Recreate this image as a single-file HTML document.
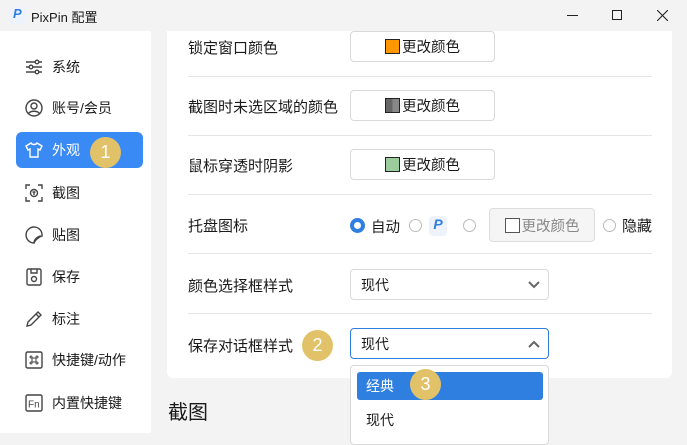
<!DOCTYPE html>
<html><head><meta charset="utf-8">
<style>
*{box-sizing:border-box;margin:0;padding:0}
body{width:687px;height:433px;overflow:hidden;background:#f3f3f3;font-family:"Liberation Sans","Noto Sans CJK SC",sans-serif;color:#1a1a1a;position:relative;font-size:14px}
.abs{position:absolute}
.side{left:0;top:31px;width:151px;height:402px;background:#fff}
.item{position:absolute;left:16px;width:127px;height:36px;display:flex;align-items:center;padding-left:8px;font-size:14px;border-radius:6px}
.item svg{width:20px;height:20px;margin-right:8px;fill:none;stroke:#444;stroke-width:1.4}
.item.act{background:#3a8af5;color:#fff}
.item.act svg{stroke:#fff}
.badge{position:absolute;width:31px;height:31px;border-radius:50%;background:#e2c268;color:#fff;font-size:18px;display:flex;align-items:center;justify-content:center}
.card{left:167px;top:31px;width:505px;height:347px;background:#fff;border-radius:0 0 6px 6px}
.line{position:absolute;left:188px;width:464px;height:1px;background:#e5e5e5}
.lbl{position:absolute;left:188px;font-size:15px}
.btn{position:absolute;left:350px;width:145px;height:31px;border:1px solid #d9d9d9;border-radius:4px;background:#fff;display:flex;align-items:center;justify-content:center;font-size:14.5px}
.sw{width:15px;height:15px;border:1px solid #222;margin-right:2px}
.sel{position:absolute;left:350px;width:199px;height:31px;border:1px solid #d9d9d9;border-radius:4px;background:#fff;padding-left:10px;display:flex;align-items:center}
.sel svg{position:absolute;right:8px;top:11px}
.radio{position:absolute;width:13px;height:13px;border-radius:50%;border:1px solid #bbb;background:#fff}
</style></head><body>
<div class="abs" style="left:9px;top:7px;width:17px;height:17px;border-radius:4px;background:#eef3fb"></div>
<div class="abs" style="left:13px;top:6px;font-weight:bold;font-style:italic;color:#2f7fe0;font-size:13px">P</div>
<div class="abs" style="left:31px;top:7px;font-size:13px">PixPin 配置</div>
<div class="abs" style="left:567px;top:15px;width:11px;height:1px;background:#222"></div>
<div class="abs" style="left:612px;top:10px;width:10px;height:10px;border:1px solid #222"></div>
<svg class="abs" style="left:657px;top:10px" width="11" height="11"><path d="M0 0L11 11M11 0L0 11" stroke="#222" stroke-width="1.1"/></svg>

<div class="abs side"></div>
<div class="item" style="top:49px"><svg viewBox="0 0 20 20"><path d="M2 5h16M2 10h16M2 15h16"/><circle cx="13" cy="5" r="1.8" fill="#fff"/><circle cx="7" cy="10" r="1.8" fill="#fff"/><circle cx="13" cy="15" r="1.8" fill="#fff"/></svg>系统</div>
<div class="item" style="top:90px"><svg viewBox="0 0 20 20"><circle cx="10" cy="10" r="8"/><circle cx="10" cy="8" r="3"/><path d="M4.5 15.5c2-3 9-3 11 0"/></svg>账号/会员</div>
<div class="item act" style="top:132px"><svg viewBox="0 0 20 20"><path d="M7 3L2 6l2 4 2-1v8h8V9l2 1 2-4-5-3c-1 2-5 2-6 0z"/></svg>外观</div>
<div class="item" style="top:175px"><svg viewBox="0 0 20 20"><path d="M2 6V2h4M14 2h4v4M18 14v4h-4M6 18H2v-4"/><circle cx="10" cy="10" r="3.5"/><path d="M8.5 9h3M10 9v3"/></svg>截图</div>
<div class="item" style="top:217px"><svg viewBox="0 0 20 20"><path d="M18 11A8 8 0 1 0 10 18c0-4 4-7 8-7zM10 18c1-3 5-6 8-7"/></svg>贴图</div>
<div class="item" style="top:259px"><svg viewBox="0 0 20 20"><rect x="3" y="2" width="14" height="16" rx="1.5"/><path d="M7 2v4h6V2"/><circle cx="10" cy="12" r="2.5"/></svg>保存</div>
<div class="item" style="top:301px"><svg viewBox="0 0 20 20"><path d="M3 17l1-4L14 3l3 3L7 16zM12 5l3 3"/></svg>标注</div>
<div class="item" style="top:342px"><svg viewBox="0 0 20 20"><rect x="2" y="2" width="16" height="16" rx="1.5"/><path d="M8 8h4v4H8zM8 8H7a1 1 0 1 1 1-1zM12 8V7a1 1 0 1 1 1 1zM12 12h1a1 1 0 1 1-1 1zM8 12v1a1 1 0 1 1-1-1z" stroke-width="1"/></svg>快捷键/动作</div>
<div class="item" style="top:385px"><svg viewBox="0 0 20 20"><rect x="2" y="2" width="16" height="16" rx="1.5"/><text x="4" y="14.5" font-size="10" fill="#444" stroke="none" font-family="Liberation Sans">Fn</text></svg>内置快捷键</div>
<div class="badge" style="left:90px;top:137px">1</div>

<div class="abs card"></div>
<div class="lbl" style="top:37px">锁定窗口颜色</div>
<div class="btn" style="top:31px"><div class="sw" style="background:#ff9800"></div>更改颜色</div>
<div class="line" style="top:76px"></div>
<div class="lbl" style="top:96px">截图时未选区域的颜色</div>
<div class="btn" style="top:90px"><div class="sw" style="background:linear-gradient(90deg,#666 50%,#888 50%)"></div>更改颜色</div>
<div class="line" style="top:135px"></div>
<div class="lbl" style="top:155px">鼠标穿透时阴影</div>
<div class="btn" style="top:149px"><div class="sw" style="background:#9ccc9c"></div>更改颜色</div>
<div class="line" style="top:194px"></div>
<div class="lbl" style="top:215px">托盘图标</div>
<div class="radio" style="left:350px;top:218px;width:15px;height:15px;border:4px solid #2f7fe0"></div>
<div class="abs" style="left:371px;top:216px;font-size:14.5px">自动</div>
<div class="radio" style="left:409px;top:219px"></div>
<div class="abs" style="left:429px;top:216px;width:18px;height:20px;border-radius:4px;background:#eef3fb;color:#2f7fe0;font-weight:bold;font-style:italic;font-size:14px;text-align:center">P</div>
<div class="radio" style="left:463px;top:219px"></div>
<div class="abs" style="left:489px;top:208px;width:106px;height:34px;border:1px solid #ddd;border-radius:4px;background:#f5f5f5;display:flex;align-items:center;justify-content:center;color:#888;font-size:14.5px"><div class="sw" style="border-color:#555;background:#fff"></div>更改颜色</div>
<div class="radio" style="left:603px;top:219px"></div>
<div class="abs" style="left:622px;top:215px;font-size:15px">隐藏</div>
<div class="line" style="top:253px"></div>
<div class="lbl" style="top:275px">颜色选择框样式</div>
<div class="sel" style="top:269px">现代<svg width="12" height="8"><path d="M1 1l5 5 5-5" stroke="#666" stroke-width="2" fill="none"/></svg></div>
<div class="line" style="top:313px"></div>
<div class="lbl" style="top:335px">保存对话框样式</div>
<div class="badge" style="left:302px;top:330px">2</div>
<div class="sel" style="top:328px;border-color:#2f7fe0">现代<svg width="12" height="8"><path d="M1 7l5-5 5 5" stroke="#666" stroke-width="2" fill="none"/></svg></div>
<div class="abs" style="left:350px;top:365px;width:199px;height:80px;border:1px solid #d9d9d9;border-radius:4px;background:#fff"></div>
<div class="abs" style="left:357px;top:372px;width:186px;height:28px;background:#2f7fe0;border-radius:3px;color:#fff;padding-left:9px;line-height:28px">经典</div>
<div class="badge" style="left:410px;top:369px">3</div>
<div class="abs" style="left:366px;top:410px">现代</div>
<div class="abs" style="left:168px;top:396px;font-size:20px">截图</div>
</body></html>
